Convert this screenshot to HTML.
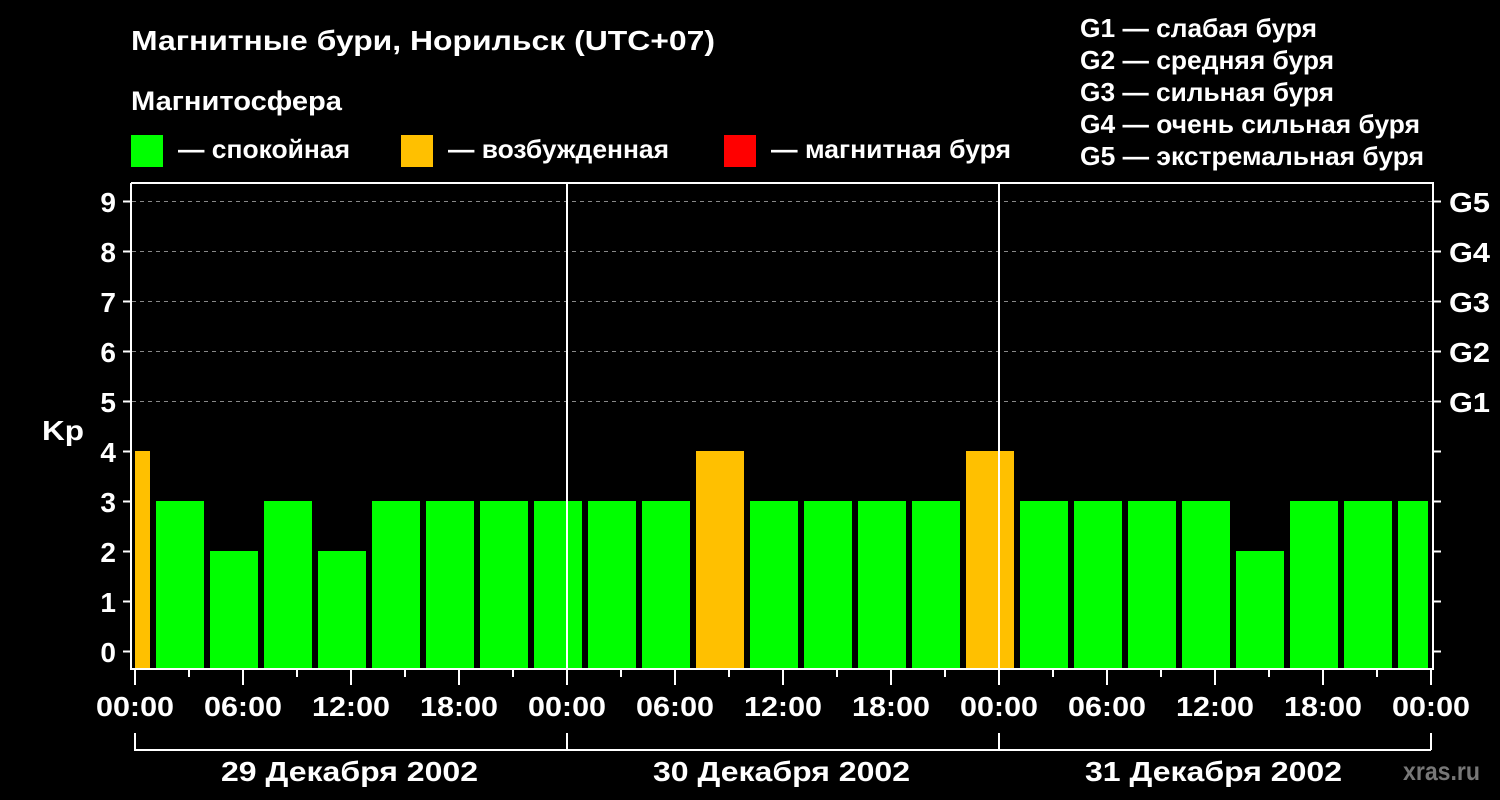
<!DOCTYPE html><html><head><meta charset="utf-8"><style>body{margin:0;background:#000;width:1500px;height:800px;overflow:hidden}svg{display:block}text{font-family:"Liberation Sans",Arial,sans-serif;font-weight:bold;fill:#fff}</style></head><body>
<svg width="1500" height="800" xmlns="http://www.w3.org/2000/svg">
<text x="131" y="50" font-size="28" textLength="584" lengthAdjust="spacingAndGlyphs">Магнитные бури, Норильск (UTC+07)</text>
<text x="131" y="110" font-size="27" textLength="211" lengthAdjust="spacingAndGlyphs">Магнитосфера</text>
<rect x="131" y="135" width="32" height="32" fill="#00ff00"/><text x="178" y="158" font-size="26" textLength="172" lengthAdjust="spacingAndGlyphs">— спокойная</text>
<rect x="401" y="135" width="32" height="32" fill="#ffc000"/><text x="448" y="158" font-size="26" textLength="221" lengthAdjust="spacingAndGlyphs">— возбужденная</text>
<rect x="724" y="135" width="32" height="32" fill="#ff0000"/><text x="771" y="158" font-size="26" textLength="240" lengthAdjust="spacingAndGlyphs">— магнитная буря</text>
<g font-size="26"><text x="1080" y="37" textLength="237" lengthAdjust="spacingAndGlyphs">G1 — слабая буря</text><text x="1080" y="69" textLength="254" lengthAdjust="spacingAndGlyphs">G2 — средняя буря</text><text x="1080" y="101" textLength="254" lengthAdjust="spacingAndGlyphs">G3 — сильная буря</text><text x="1080" y="133" textLength="340" lengthAdjust="spacingAndGlyphs">G4 — очень сильная буря</text><text x="1080" y="165" textLength="344" lengthAdjust="spacingAndGlyphs">G5 — экстремальная буря</text></g>
<g stroke="#888" stroke-dasharray="4,4" stroke-width="1"><line x1="132" x2="1432" y1="201.5" y2="201.5"/><line x1="132" x2="1432" y1="251.5" y2="251.5"/><line x1="132" x2="1432" y1="301.5" y2="301.5"/><line x1="132" x2="1432" y1="351.5" y2="351.5"/><line x1="132" x2="1432" y1="401.5" y2="401.5"/></g>
<rect x="135" y="451" width="15" height="217" fill="#ffc000"/>
<g fill="#00ff00">
<rect x="156" y="501" width="48" height="167"/><rect x="210" y="551" width="48" height="117"/><rect x="264" y="501" width="48" height="167"/><rect x="318" y="551" width="48" height="117"/><rect x="372" y="501" width="48" height="167"/><rect x="426" y="501" width="48" height="167"/><rect x="480" y="501" width="48" height="167"/><rect x="534" y="501" width="48" height="167"/><rect x="588" y="501" width="48" height="167"/><rect x="642" y="501" width="48" height="167"/><rect x="750" y="501" width="48" height="167"/><rect x="804" y="501" width="48" height="167"/><rect x="858" y="501" width="48" height="167"/><rect x="912" y="501" width="48" height="167"/><rect x="1020" y="501" width="48" height="167"/><rect x="1074" y="501" width="48" height="167"/><rect x="1128" y="501" width="48" height="167"/><rect x="1182" y="501" width="48" height="167"/><rect x="1236" y="551" width="48" height="117"/><rect x="1290" y="501" width="48" height="167"/><rect x="1344" y="501" width="48" height="167"/><rect x="1398" y="501" width="30" height="167"/>
</g>
<rect x="696" y="451" width="48" height="217" fill="#ffc000"/><rect x="966" y="451" width="48" height="217" fill="#ffc000"/>
<g stroke="#fff" stroke-width="2" fill="none">
<path d="M131 183V669H1433V183H131"/>
<line x1="567" y1="183" x2="567" y2="669"/><line x1="999" y1="183" x2="999" y2="669"/>
<path d="M123 201.5h8M123 251.5h8M123 301.5h8M123 351.5h8M123 401.5h8M123 451.5h8M123 501.5h8M123 551.5h8M123 601.5h8M123 651.5h8"/>
<path d="M1433 201.5h8M1433 251.5h8M1433 301.5h8M1433 351.5h8M1433 401.5h8M1433 451.5h8M1433 501.5h8M1433 551.5h8M1433 601.5h8M1433 651.5h8"/>
<path d="M135 669v16M189 669v8M243 669v16M297 669v8M351 669v16M405 669v8M459 669v16M513 669v8M567 669v16M621 669v8M675 669v16M729 669v8M783 669v16M837 669v8M891 669v16M945 669v8M999 669v16M1053 669v8M1107 669v16M1161 669v8M1215 669v16M1269 669v8M1323 669v16M1377 669v8M1431 669v16"/>
<path d="M135 733v17H1431M567 733v17M999 733v17M1431 733v17"/>
</g>
<g font-size="28" text-anchor="end"><text x="116" y="662">0</text><text x="116" y="612">1</text><text x="116" y="562">2</text><text x="116" y="512">3</text><text x="116" y="462">4</text><text x="116" y="412">5</text><text x="116" y="362">6</text><text x="116" y="312">7</text><text x="116" y="262">8</text><text x="116" y="212">9</text></g>
<text x="42" y="440" font-size="28" textLength="42" lengthAdjust="spacingAndGlyphs">Kp</text>
<g font-size="28"><text x="1449" y="212" textLength="41" lengthAdjust="spacingAndGlyphs">G5</text><text x="1449" y="262" textLength="41" lengthAdjust="spacingAndGlyphs">G4</text><text x="1449" y="312" textLength="41" lengthAdjust="spacingAndGlyphs">G3</text><text x="1449" y="362" textLength="41" lengthAdjust="spacingAndGlyphs">G2</text><text x="1449" y="412" textLength="41" lengthAdjust="spacingAndGlyphs">G1</text></g>
<g font-size="28"><text x="96" y="716" textLength="78" lengthAdjust="spacingAndGlyphs">00:00</text><text x="204" y="716" textLength="78" lengthAdjust="spacingAndGlyphs">06:00</text><text x="312" y="716" textLength="78" lengthAdjust="spacingAndGlyphs">12:00</text><text x="420" y="716" textLength="78" lengthAdjust="spacingAndGlyphs">18:00</text><text x="528" y="716" textLength="78" lengthAdjust="spacingAndGlyphs">00:00</text><text x="636" y="716" textLength="78" lengthAdjust="spacingAndGlyphs">06:00</text><text x="744" y="716" textLength="78" lengthAdjust="spacingAndGlyphs">12:00</text><text x="852" y="716" textLength="78" lengthAdjust="spacingAndGlyphs">18:00</text><text x="960" y="716" textLength="78" lengthAdjust="spacingAndGlyphs">00:00</text><text x="1068" y="716" textLength="78" lengthAdjust="spacingAndGlyphs">06:00</text><text x="1176" y="716" textLength="78" lengthAdjust="spacingAndGlyphs">12:00</text><text x="1284" y="716" textLength="78" lengthAdjust="spacingAndGlyphs">18:00</text><text x="1392" y="716" textLength="78" lengthAdjust="spacingAndGlyphs">00:00</text>
<text x="221" y="781" textLength="257" lengthAdjust="spacingAndGlyphs">29 Декабря 2002</text><text x="653" y="781" textLength="257" lengthAdjust="spacingAndGlyphs">30 Декабря 2002</text><text x="1085" y="781" textLength="257" lengthAdjust="spacingAndGlyphs">31 Декабря 2002</text></g>
<text x="1403" y="780" font-size="26" textLength="77" lengthAdjust="spacingAndGlyphs" style="fill:#777">xras.ru</text>
</svg></body></html>
